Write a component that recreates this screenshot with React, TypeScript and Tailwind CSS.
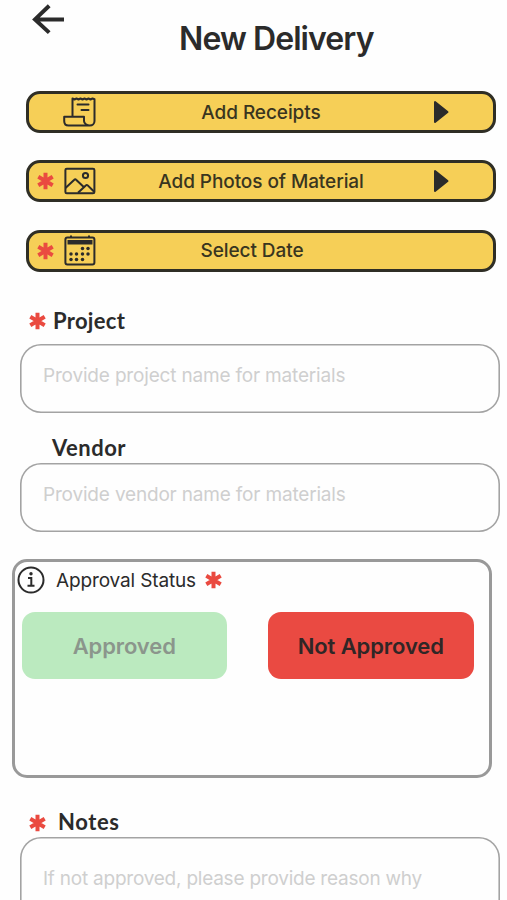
import type { ReactNode } from 'react';

const INK = '#2b2b2b';

function Asterisk() {
  return (
    <svg width="17" height="18" viewBox="0 0 17 18" fill="none" stroke="#ea4a40" strokeWidth="4">
      <path d="M8.5 .8v16.4M1.3 4.8l14.4 8.4M1.3 13.2l14.4-8.4" />
    </svg>
  );
}

function ReceiptIcon() {
  return (
    <svg className="-ml-px" width="34" height="32" viewBox="0 0 34 32" fill="none" stroke={INK} strokeWidth="2" strokeLinejoin="round" strokeLinecap="round">
      <path d="M9.500 20.500V2.500l2 1 2-1 2 1 2-1 2 1 2-1 2 1 2-1 2 1 2-1 2 .8V25c0 2.700-2 4.500-4.700 4.500S21 27.700 21 25v-4.200H1.200V25c0 2.700 1.600 4.500 4.300 4.500H26" />
      <path d="M14.500 8.500h11M18.500 14h7" />
    </svg>
  );
}

function PhotoIcon() {
  return (
    <svg width="32" height="28" viewBox="0 0 32 28" fill="none" stroke={INK} strokeWidth="2" strokeLinejoin="round">
      <rect x="1.400" y="1.700" width="29" height="24.600" rx="1.400" />
      <circle cx="21.500" cy="8.500" r="2.600" />
      <path d="M1.500 21l8.800-8.200c.6-.6 1.200-.6 1.800 0l7.400 7M14 25.800l7.800-7.400c.6-.6 1.300-.6 1.900 0l6.500 6.400" />
    </svg>
  );
}

function CalendarIcon() {
  const dots = [[18.5, 13.5], [24, 13.5], [7, 19], [12.5, 19], [18.5, 19], [24, 19], [7, 24.5], [12.5, 24.5], [18.5, 24.5]];
  return (
    <svg width="32" height="31" viewBox="0 0 32 31" fill="none" stroke={INK} strokeWidth="2">
      <rect x="1.400" y="2.500" width="29" height="27" rx="2" />
      <path d="M7 .6v2M25 .6v2" />
      <path d="M3.500 5h25v4.500h-25z" fill={INK} stroke="none" />
      {dots.map(([x, y]) => <circle key={`${x}-${y}`} cx={x} cy={y} r="1.750" fill={INK} stroke="none" />)}
    </svg>
  );
}

function ActionRow({ icon, label, required, arrow }: { icon: ReactNode; label: ReactNode; required?: boolean; arrow?: boolean }) {
  return (
    <button className="grid h-[42px] w-[470px] grid-cols-[132px_200px_1fr] items-center rounded-[14px] border-[3px] border-[#2f2e25] bg-[#f6cf57] text-[19px] font-medium tracking-[-0.08px] text-[#39351f]">
      <span className="flex items-center pl-[8px]">
        <span className="w-[27px]">{required && <Asterisk />}</span>
        {icon}
      </span>
      <span className="flex justify-center whitespace-nowrap pt-px leading-6">{label}</span>
      <span className="pl-[72px]">
        {arrow && (
          <svg width="17" height="24" viewBox="0 0 17 24" fill={INK} stroke={INK} strokeWidth="2" strokeLinejoin="round">
            <path d="M2 2v20L14.500 12z" />
          </svg>
        )}
      </span>
    </button>
  );
}

function Field({ placeholder }: { placeholder: ReactNode }) {
  return (
    <div className="ml-5 h-[69px] w-[480px] rounded-[21px] pl-[23px] pt-[20px] text-[19px] leading-6 tracking-[-0.18px] text-[#cfcfcf] shadow-[inset_0_0_0_1.6px_#a3a3a3]">
      {placeholder}
    </div>
  );
}

export default function App() {
  return (
    <main className="h-[900px] w-[507px] overflow-hidden bg-[#fefefe] font-['Inter',sans-serif] text-[#2b2b2b]">
      <header className="flex h-[91px] items-start">
        <svg className="ml-8 mt-1" width="33" height="31" viewBox="0 0 33 31" fill="none" stroke={INK} strokeWidth="4">
          <path d="M32 15.400H3M17.200 1.800L3 15.400l14.200 13.200" />
        </svg>
        <h1 className="ml-[114px] mt-[19px] whitespace-nowrap text-[32px] font-semibold leading-10 tracking-[-0.92px]">New Delivery</h1>
      </header>

      <section className="ml-[26px] flex flex-col gap-[27.300px]">
        <ActionRow icon={<ReceiptIcon />} label={<span>Add Receipts</span>} arrow />
        <ActionRow icon={<PhotoIcon />} label={<span>Add Photos of Material</span>} required arrow />
        <ActionRow icon={<CalendarIcon />} label={<span className="-translate-x-[9px]">Select Date</span>} required />
      </section>

      <div className="mt-[33.400px] flex h-[39px] items-start pl-[29px] font-['Lato',sans-serif] text-[22px] font-bold leading-8 tracking-[0.3px]">
        <span className="mt-[7px]"><Asterisk /></span>
        <span className="ml-[7px]">Project</span>
      </div>
      <Field placeholder={<span>Provide project name for materials</span>} />

      <div className="mt-[19px] h-[31px] pl-[52px] font-['Lato',sans-serif] text-[22px] font-bold leading-8 tracking-[0.5px]">Vendor</div>
      <Field placeholder={<span>Provide vendor name for materials</span>} />

      <section className="ml-3 mt-[27px] h-[219px] w-[480px] rounded-[15px] border-[3px] border-[#999]">
        <div className="flex h-[50px] items-start pl-[2px] pt-[4px]">
          <svg width="28" height="28" viewBox="0 0 28 28" fill="none" stroke={INK} strokeWidth="2">
            <circle cx="14" cy="14" r="12.500" />
            <path d="M11 12h3.300v7.500M10.500 19.700h7" />
            <circle cx="14" cy="7.700" r="1.700" fill={INK} stroke="none" />
          </svg>
          <span className="ml-[11px] mt-[3px] whitespace-nowrap text-[19px] leading-6 tracking-[-0.14px]">Approval Status</span>
          <span className="ml-[9px] mt-[5px]"><Asterisk /></span>
        </div>
        <div className="flex gap-[41px] pl-[6.500px] text-[22px] font-semibold">
          <button className="h-[67px] w-[205.500px] rounded-[13px] bg-[#bbeabf] pt-[2px] tracking-[-0.1px] text-[#8b968c]">Approved</button>
          <button className="h-[67px] w-[205.500px] rounded-[13px] bg-[#ea4a42] pt-[2px] tracking-[-0.1px] text-[#302626]">Not Approved</button>
        </div>
      </section>

      <div className="mt-[28px] flex h-[31px] items-start pl-[29px] font-['Lato',sans-serif] text-[22px] font-bold leading-8 tracking-[0.6px]">
        <span className="mt-[8px]"><Asterisk /></span>
        <span className="ml-[12px]">Notes</span>
      </div>
      <div className="ml-5 h-[120px] w-[480px] rounded-[21px] pl-[23px] pt-[30px] text-[19px] leading-6 tracking-[-0.23px] text-[#cfcfcf] shadow-[inset_0_0_0_1.6px_#a3a3a3]">
        <span>If not approved, please provide reason why</span>
      </div>
    </main>
  );
}
